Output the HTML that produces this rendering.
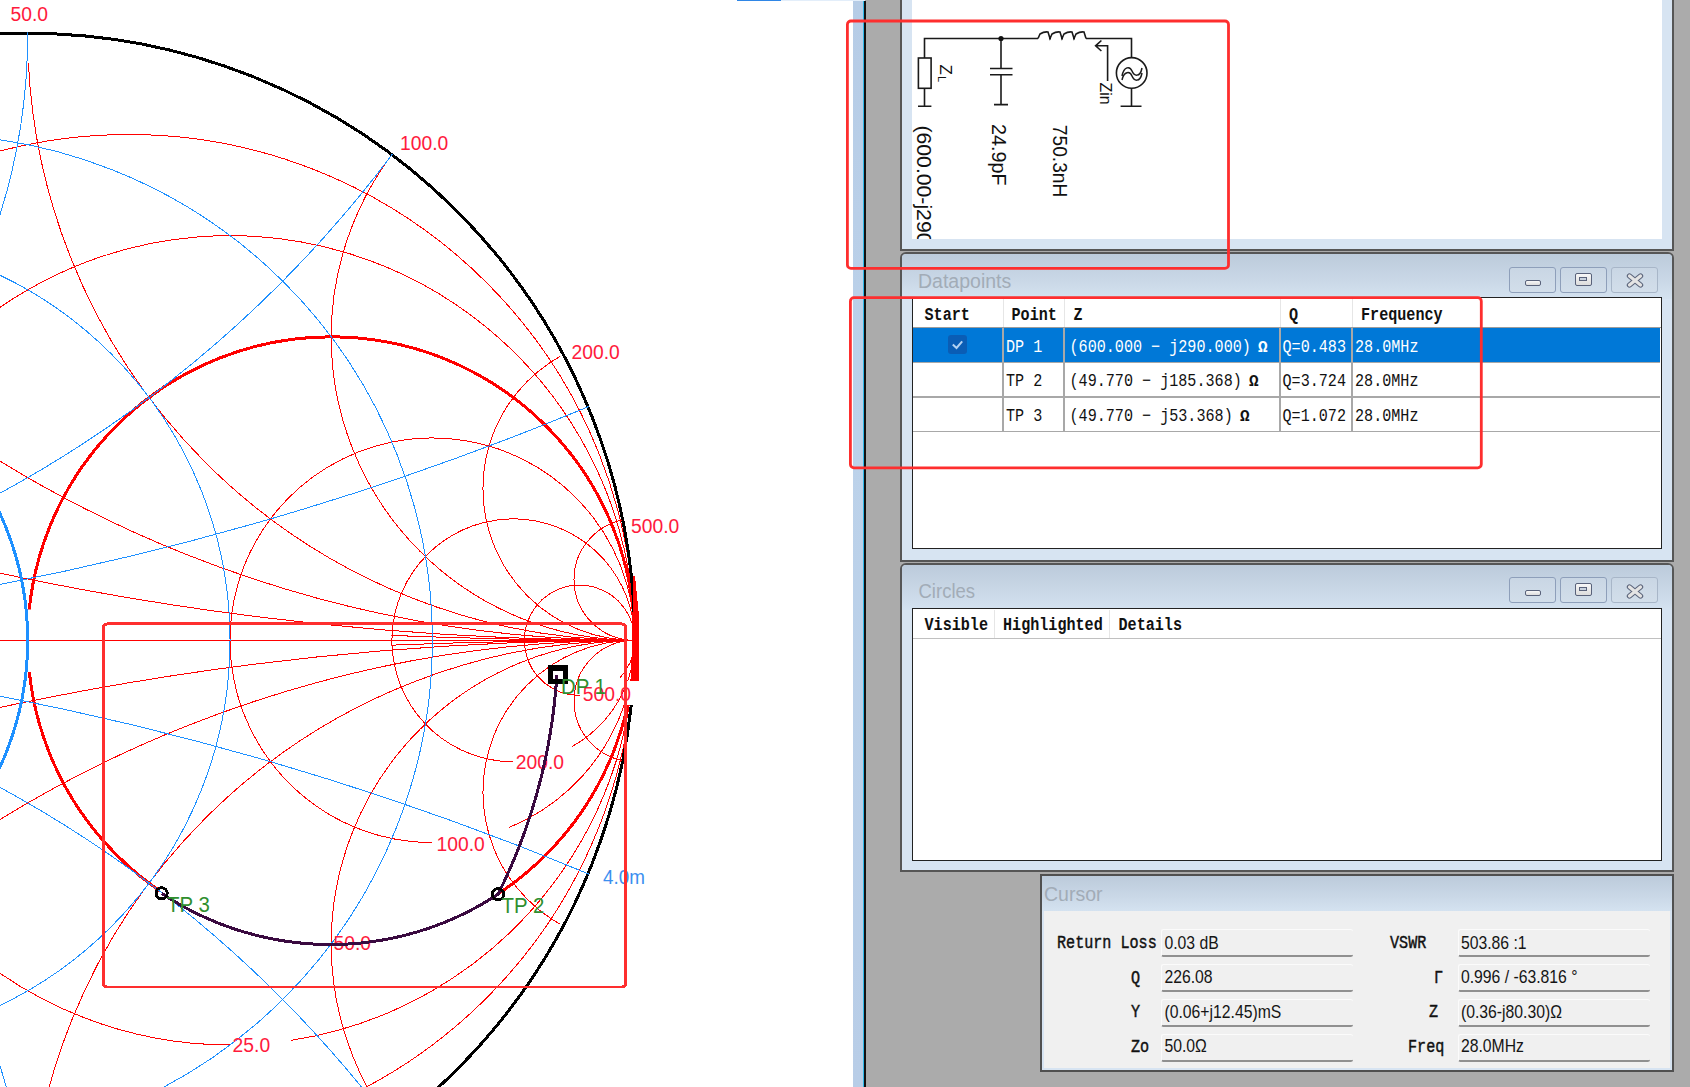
<!DOCTYPE html>
<html><head><meta charset="utf-8">
<style>
html,body{margin:0;padding:0;width:1690px;height:1087px;overflow:hidden;background:#fff;font-family:"Liberation Sans",sans-serif;}
.a{position:absolute;}
#chart{position:absolute;left:0;top:0;width:853px;height:1087px;}
#bg{left:865px;top:0;width:825px;height:1087px;background:#ababab;}
#strip{left:853px;top:1px;width:10px;height:1086px;background:linear-gradient(#b6cce6,#bcd2ea 40%,#b8cde7);}
#stripc{left:863px;top:1px;width:1px;height:1086px;background:#2fb8e8;}
#stripk{left:864px;top:1px;width:1.5px;height:1086px;background:#111;}
.panel{position:absolute;background:#d7e4f2;border:2px solid #565656;box-sizing:border-box;}
.title{position:absolute;left:0;right:0;top:0;height:45px;background:linear-gradient(#bccbdb,#cad8e7 60%,#d4e2f0);}
.ttext{position:absolute;left:16px;font-size:19px;color:#a3adb8;}
.tbl{position:absolute;background:#fff;border:1.5px solid #222;box-sizing:border-box;overflow:hidden;}
.mono{font-family:"Liberation Mono",monospace;}
.btn{position:absolute;top:0;width:46px;height:26px;box-sizing:border-box;border:1px solid #8e9fba;border-radius:3px;background:linear-gradient(#c9d6e4,#d2deea);}
.fld{position:absolute;width:192px;height:28px;box-sizing:border-box;background:#f0f0f0;border-top:1px solid #fbfbfb;border-left:1px solid #fbfbfb;border-bottom:2px solid #909090;border-radius:2.5px;font-size:17px;color:#111;padding-left:3px;line-height:26px;white-space:nowrap;}
.lbl{position:absolute;font-family:"Liberation Mono",monospace;font-size:15px;font-weight:bold;color:#111;white-space:nowrap;letter-spacing:-0.2px;}
.cell{position:absolute;font-family:"Liberation Mono",monospace;font-size:15px;white-space:nowrap;}
</style></head><body>
<svg id="chart" width="853" height="1087" viewBox="0 0 853 1087" shape-rendering="crispEdges">
<defs><clipPath id="uc"><circle cx="27.70" cy="640.30" r="608.00"/></clipPath>
<clipPath id="r4"><circle cx="513.30" cy="640.30" r="122.40"/></clipPath>
<clipPath id="gap"><path d="M-10 -10H900V609.5H-10Z M-10 672H900V1100H-10Z"/></clipPath>
<clipPath id="nb"><path d="M-10 -10H900V880H-10Z M-10 880H160V1100H-10Z M500 880H900V1100H500Z"/></clipPath>
<clipPath id="r005"><circle cx="56.60" cy="640.30" r="578.10"/></clipPath>
</defs>
<g clip-path="url(#uc)"><circle cx="128.87" cy="640.30" r="505.83" stroke="#ff0000" stroke-width="1" fill="none"/><path d="M230.03 1044.97 A404.67 404.67 0 0 1 199.34 236.80 A404.67 404.67 0 0 1 291.24 1040.31" stroke="#ff0000" stroke-width="1" fill="none"/><path d="M432.37 842.63 A202.33 202.33 0 0 1 393.41 441.75 A202.33 202.33 0 0 1 508.82 827.63" stroke="#ff0000" stroke-width="1" fill="none"/><path d="M513.30 761.70 A121.40 121.40 0 0 1 483.01 522.74 A121.40 121.40 0 0 1 571.97 746.58" stroke="#ff0000" stroke-width="1" fill="none"/><path d="M579.52 695.48 A55.18 55.18 0 0 1 557.43 589.73 A55.18 55.18 0 0 1 620.01 677.79" stroke="#ff0000" stroke-width="1" fill="none"/><line x1="-579.3" y1="640.3" x2="634.7" y2="640.3" stroke="#ff0000" stroke-width="1.2"/><g clip-path="url(#gap)"><g clip-path="url(#nb)"><circle cx="331.20" cy="640.30" r="303.50" stroke="#ff0000" stroke-width="3" fill="none"/></g></g></g>
<circle cx="27.70" cy="640.30" r="607.00" stroke="#000" stroke-width="3" fill="none"/>
<path d="M632.5 576 L635 576 L638.6 612 L638.6 681 L631 681 L632.5 612Z" fill="#ff0000"/>
<rect x="626.5" y="681" width="18" height="24" fill="#fff"/>
<g clip-path="url(#uc)"><g clip-path="url(#r005)"><circle cx="634.70" cy="-2394.70" r="3035.00" stroke="#ff0000" stroke-width="1" fill="none"/><circle cx="634.70" cy="3675.30" r="3035.00" stroke="#ff0000" stroke-width="1" fill="none"/><circle cx="634.70" cy="-573.70" r="1214.00" stroke="#ff0000" stroke-width="1" fill="none"/><circle cx="634.70" cy="1854.30" r="1214.00" stroke="#ff0000" stroke-width="1" fill="none"/><circle cx="634.70" cy="33.30" r="607.00" stroke="#ff0000" stroke-width="1" fill="none"/><circle cx="634.70" cy="1247.30" r="607.00" stroke="#ff0000" stroke-width="1" fill="none"/><circle cx="634.70" cy="336.80" r="303.50" stroke="#ff0000" stroke-width="1" fill="none"/><circle cx="634.70" cy="943.80" r="303.50" stroke="#ff0000" stroke-width="1" fill="none"/><circle cx="634.70" cy="488.55" r="151.75" stroke="#ff0000" stroke-width="1" fill="none"/><circle cx="634.70" cy="792.05" r="151.75" stroke="#ff0000" stroke-width="1" fill="none"/><circle cx="634.70" cy="579.60" r="60.70" stroke="#ff0000" stroke-width="1" fill="none"/><circle cx="634.70" cy="701.00" r="60.70" stroke="#ff0000" stroke-width="1" fill="none"/></g><g clip-path="url(#r4)"><circle cx="634.70" cy="-5429.70" r="6070.00" stroke="#ff0000" stroke-width="1" fill="none"/></g><g clip-path="url(#r4)"><circle cx="634.70" cy="6710.30" r="6070.00" stroke="#ff0000" stroke-width="1" fill="none"/></g><circle cx="-73.47" cy="640.30" r="505.83" stroke="#1e90ff" stroke-width="1" fill="none"/><circle cx="-174.63" cy="640.30" r="404.67" stroke="#1e90ff" stroke-width="1" fill="none"/><circle cx="-579.30" cy="-2394.70" r="3035.00" stroke="#1e90ff" stroke-width="1" fill="none"/><circle cx="-579.30" cy="3675.30" r="3035.00" stroke="#1e90ff" stroke-width="1" fill="none"/><circle cx="-579.30" cy="-573.70" r="1214.00" stroke="#1e90ff" stroke-width="1" fill="none"/><circle cx="-579.30" cy="1854.30" r="1214.00" stroke="#1e90ff" stroke-width="1" fill="none"/><circle cx="-579.30" cy="33.30" r="607.00" stroke="#1e90ff" stroke-width="1" fill="none"/><circle cx="-579.30" cy="1247.30" r="607.00" stroke="#1e90ff" stroke-width="1" fill="none"/><circle cx="-275.80" cy="640.30" r="303.50" stroke="#1e90ff" stroke-width="3" fill="none"/></g>
<text transform="translate(10.50,21.44) scale(0.92,1)" font-size="21" fill="#ff1a3c">50.0</text><text transform="translate(400.00,149.54) scale(0.92,1)" font-size="21" fill="#ff1a3c">100.0</text><text transform="translate(571.50,359.04) scale(0.92,1)" font-size="21" fill="#ff1a3c">200.0</text><text transform="translate(631.00,533.04) scale(0.92,1)" font-size="21" fill="#ff1a3c">500.0</text><text transform="translate(582.70,700.84) scale(0.92,1)" font-size="21" fill="#ff1a3c">500.0</text><text transform="translate(515.80,768.54) scale(0.92,1)" font-size="21" fill="#ff1a3c">200.0</text><text transform="translate(436.50,850.54) scale(0.92,1)" font-size="21" fill="#ff1a3c">100.0</text><text transform="translate(232.60,1052.34) scale(0.92,1)" font-size="21" fill="#ff1a3c">25.0</text><text transform="translate(603.00,884.18) scale(0.92,1)" font-size="20.5" fill="#3b8ff0">4.0m</text>
<text transform="translate(333.50,950.34) scale(0.92,1)" font-size="21" fill="#ff1a3c">50.0</text>
<path d="M556.82 675.05 L556.64 677.90 L556.44 680.75 L556.23 683.59 L556.01 686.44 L555.77 689.29 L555.51 692.13 L555.25 694.97 L554.96 697.81 L554.67 700.65 L554.36 703.49 L554.03 706.33 L553.70 709.16 L553.34 712.00 L552.97 714.83 L552.59 717.66 L552.20 720.49 L551.79 723.31 L551.36 726.14 L550.93 728.96 L550.47 731.78 L550.01 734.60 L549.53 737.41 L549.03 740.22 L548.52 743.03 L548.00 745.84 L547.46 748.64 L546.91 751.45 L546.35 754.24 L545.77 757.04 L545.17 759.83 L544.57 762.62 L543.95 765.41 L543.31 768.19 L542.66 770.98 L542.00 773.75 L541.32 776.53 L540.63 779.30 L539.92 782.06 L539.21 784.83 L538.47 787.59 L537.73 790.34 L536.97 793.10 L536.19 795.84 L535.40 798.59 L534.60 801.33 L533.79 804.07 L532.96 806.80 L532.11 809.53 L531.26 812.25 L530.39 814.97 L529.50 817.68 L528.61 820.40 L527.69 823.10 L526.77 825.80 L525.83 828.50 L524.88 831.19 L523.91 833.88 L522.93 836.56 L521.94 839.24 L520.94 841.91 L519.92 844.58 L518.88 847.24 L517.84 849.90 L516.78 852.55 L515.71 855.20 L514.62 857.84 L513.52 860.47 L512.41 863.10 L511.28 865.73 L510.15 868.35 L508.99 870.96 L507.83 873.56 L506.65 876.17 L505.46 878.76 L504.26 881.35 L503.04 883.93 L501.81 886.51 L500.57 889.08 L499.31 891.65 L498.04 894.20 L498.04 894.20 L494.31 896.63 L490.53 899.00 L486.73 901.32 L482.89 903.58 L479.02 905.78 L475.11 907.93 L471.18 910.02 L467.21 912.05 L463.22 914.02 L459.19 915.94 L455.14 917.79 L451.07 919.59 L446.96 921.32 L442.83 923.00 L438.68 924.61 L434.51 926.17 L430.31 927.66 L426.09 929.09 L421.85 930.46 L417.59 931.77 L413.31 933.01 L409.02 934.19 L404.70 935.31 L400.37 936.37 L396.03 937.36 L391.67 938.29 L387.30 939.15 L382.92 939.95 L378.52 940.68 L374.12 941.36 L369.71 941.96 L365.28 942.50 L360.85 942.98 L356.42 943.39 L351.98 943.74 L347.53 944.02 L343.08 944.24 L338.63 944.39 L334.17 944.48 L329.72 944.50 L325.26 944.45 L320.81 944.35 L316.36 944.17 L311.91 943.93 L307.46 943.63 L303.02 943.26 L298.59 942.82 L294.16 942.32 L289.74 941.76 L285.33 941.13 L280.93 940.43 L276.54 939.68 L272.16 938.85 L267.79 937.97 L263.44 937.02 L259.10 936.00 L254.78 934.92 L250.47 933.78 L246.18 932.58 L241.91 931.31 L237.66 929.99 L233.43 928.60 L229.21 927.14 L225.02 925.63 L220.86 924.05 L216.71 922.42 L212.59 920.72 L208.50 918.96 L204.43 917.15 L200.39 915.27 L196.38 913.33 L192.39 911.34 L188.44 909.29 L184.51 907.18 L180.62 905.01 L176.76 902.79 L172.93 900.51 L169.14 898.17 L165.38 895.78 L161.65 893.34" stroke="#3a0a40" stroke-width="3" fill="none"/>
<rect x="550.42" y="667.80" width="15" height="13.5" stroke="#000" stroke-width="5.5" fill="none"/>
<circle cx="498.04" cy="894.20" r="5.6" stroke="#000" stroke-width="3" fill="none"/>
<circle cx="161.65" cy="893.34" r="5.6" stroke="#000" stroke-width="3" fill="none"/>
<text transform="translate(560.90,694.09) scale(0.95,1)" font-size="21.5" fill="#2f8f2f">DP 1</text>
<text transform="translate(501.50,912.89) scale(0.95,1)" font-size="21.5" fill="#2f8f2f">TP 2</text>
<text transform="translate(167.00,911.89) scale(0.95,1)" font-size="21.5" fill="#2f8f2f">TP 3</text>
<rect x="103.5" y="623.9" width="522" height="363.1" rx="3.5" stroke="#fe2e2e" stroke-width="2.9" fill="none"/>
</svg>
<div class="a" style="left:737px;top:0;width:44px;height:1px;background:#2f86e6"></div>
<div class="a" style="left:781px;top:0;width:137px;height:1px;background:#e3eefa"></div><div class="a" style="left:917px;top:0;width:3px;height:1px;background:#2f86e6"></div>
<div id="bg" class="a"></div>
<div id="strip" class="a"></div>
<div id="stripc" class="a"></div>
<div id="stripk" class="a"></div>
<!-- Panel 1: schematic -->
<div class="panel" style="left:900px;top:-2px;width:774px;height:253px;"></div>
<div class="a" style="left:912px;top:0;width:749.5px;height:238.6px;background:#fff;overflow:hidden;">
<svg width="750" height="239" viewBox="912 0 750 239" style="position:absolute;left:0;top:0">
<g stroke="#1a1a1a" stroke-width="1.6" fill="none">
<path d="M924.5 88.3V106.2M918 106.2H931.4M924.5 58V38.5H1038M1086 38.5H1131.5V57.5M1131.5 88.4V106.2M1120.6 106.2H1141.5"/>
<rect x="918.4" y="58" width="12.7" height="30.3"/>
<path d="M1001 38.5V68.5M990 68.5H1012.5M990 74.7H1012.5M1001 74.7V104.6M994 104.6H1008"/>
<path d="M1038 38.5 L1040 34 Q1044 31.5,1048 32 L1050 38.5 L1052 34 Q1056 31.5,1060 32 L1062 38.5 L1064 34 Q1068 31.5,1072 32 L1074 38.5 L1076 34 Q1080 31.5,1084 32 L1086 38.5"/>
<circle cx="1131.7" cy="72.9" r="15.3"/>
<path d="M1122 76 C1124 66,1130 66,1132 71 S1140 78,1142 68" stroke-width="1.5"/>
<path d="M1122 80 C1124 71,1130 71,1132 76 S1140 83,1142 73" stroke-width="1.5"/>
<path d="M1107.6 81V45.8H1095.6M1101.4 40.5L1095.6 45.8L1101.4 51"/>
</g>
<g fill="#111"><circle cx="1001" cy="38.5" r="2.6"/><circle cx="1050" cy="38.5" r="1"/><circle cx="1062" cy="38.5" r="1"/><circle cx="1074" cy="38.5" r="1"/></g>
<g font-family="Liberation Sans" fill="#111">
<text transform="translate(940,64.5) rotate(90)" font-size="17">Z</text>
<text transform="translate(937.5,76) rotate(90)" font-size="11">L</text>
<text transform="translate(1099.5,82.5) rotate(90)" font-size="16">Zin</text>
<text transform="translate(917,125.5) rotate(90) scale(1.06,1)" font-size="20">(600.00-j290.00)</text>
<text transform="translate(992,124) rotate(90) scale(0.99,1)" font-size="20">24.9pF</text>
<text transform="translate(1052.5,124.8) rotate(90) scale(0.96,1)" font-size="20">750.3nH</text>
</g>
</svg>
</div>

<!-- Panel 2: Datapoints -->
<div class="panel" style="left:900px;top:252px;width:774px;height:310px;border-radius:6px 6px 0 0;overflow:hidden;">
  <div class="title">
    <div class="btn" style="width:47px;left:607px;top:12.5px;"><div class="a" style="left:14.5px;top:12px;width:16.5px;height:6px;border:1.2px solid #59627a;border-radius:2px;background:linear-gradient(#f8f8f8,#dcdcdc);box-sizing:border-box"></div></div>
    <div class="btn" style="width:47px;left:658px;top:12.5px;"><div class="a" style="left:14px;top:5px;width:16.5px;height:13px;border:1.3px solid #59627a;border-radius:2px;background:linear-gradient(#f8f8f8,#dcdcdc);box-sizing:border-box"><div class="a" style="left:3.2px;top:3.2px;width:7.5px;height:4px;border:1.2px solid #59627a;box-sizing:border-box;background:#c8d2de"></div></div></div>
    <div class="btn" style="width:47px;left:709px;top:12.5px;border-color:#a8b6c8;"><svg class="a" style="left:14px;top:5.5px" width="18" height="15"><path d="M3.5 3L14.5 12M14.5 3L3.5 12" stroke="#5d667c" stroke-width="5.4" stroke-linecap="round"/><path d="M3.5 3L14.5 12M14.5 3L3.5 12" stroke="#e4e4e4" stroke-width="3.2" stroke-linecap="round"/></svg></div>
  </div>
  <div class="tbl" style="left:10px;top:43px;width:750px;height:252px;">
    <div class="a" style="left:0;top:28.5px;width:750px;height:1.7px;background:#9c9c9c"></div>
    <div class="a" style="left:89.5px;top:0;width:1px;height:29px;background:#e6e6e6"></div>
    <div class="a" style="left:150.5px;top:0;width:1px;height:29px;background:#e6e6e6"></div>
    <div class="a" style="left:366.5px;top:0;width:1px;height:29px;background:#e6e6e6"></div>
    <div class="a" style="left:438.5px;top:0;width:1px;height:29px;background:#e6e6e6"></div>
    <div class="a" style="left:0;top:30px;width:747px;height:33.5px;background:#0078d7"></div>
    <div class="a" style="left:0;top:63.5px;width:747px;height:1.5px;background:#a8a8a8"></div>
    <div class="a" style="left:0;top:98px;width:747px;height:1.5px;background:#a8a8a8"></div>
    <div class="a" style="left:0;top:132.5px;width:747px;height:1.5px;background:#a8a8a8"></div>
    <div class="a" style="left:89px;top:30px;width:1.5px;height:103px;background:#a8a8a8"></div>
    <div class="a" style="left:150px;top:30px;width:1.5px;height:103px;background:#a8a8a8"></div>
    <div class="a" style="left:366px;top:30px;width:1.5px;height:103px;background:#a8a8a8"></div>
    <div class="a" style="left:438px;top:30px;width:1.5px;height:103px;background:#a8a8a8"></div>
    <div class="a" style="left:35px;top:37px;width:19px;height:19px;border-radius:3px;background:#0a5db5;"><svg class="a" style="left:0;top:0" width="19" height="19"><path d="M4.8 9.5L8.5 13L14.2 6.3" stroke="#b4d2f2" stroke-width="2" fill="none"/></svg></div>
  </div>
</div>

<!-- Panel 3: Circles -->
<div class="panel" style="left:900px;top:562.5px;width:774px;height:309.5px;border-radius:6px 6px 0 0;overflow:hidden;">
  <div class="title">
    <div class="btn" style="width:47px;left:607px;top:12.5px;"><div class="a" style="left:14.5px;top:12px;width:16.5px;height:6px;border:1.2px solid #59627a;border-radius:2px;background:linear-gradient(#f8f8f8,#dcdcdc);box-sizing:border-box"></div></div>
    <div class="btn" style="width:47px;left:658px;top:12.5px;"><div class="a" style="left:14px;top:5px;width:16.5px;height:13px;border:1.3px solid #59627a;border-radius:2px;background:linear-gradient(#f8f8f8,#dcdcdc);box-sizing:border-box"><div class="a" style="left:3.2px;top:3.2px;width:7.5px;height:4px;border:1.2px solid #59627a;box-sizing:border-box;background:#c8d2de"></div></div></div>
    <div class="btn" style="width:47px;left:709px;top:12.5px;border-color:#a8b6c8;"><svg class="a" style="left:14px;top:5.5px" width="18" height="15"><path d="M3.5 3L14.5 12M14.5 3L3.5 12" stroke="#5d667c" stroke-width="5.4" stroke-linecap="round"/><path d="M3.5 3L14.5 12M14.5 3L3.5 12" stroke="#e4e4e4" stroke-width="3.2" stroke-linecap="round"/></svg></div>
  </div>
  <div class="tbl" style="left:10px;top:43.5px;width:750px;height:253px;">
    <div class="a" style="left:0;top:28.5px;width:750px;height:1.5px;background:#c0c0c0"></div>
    <div class="a" style="left:80.5px;top:1px;width:1px;height:28px;background:#e6e6e6"></div>
    <div class="a" style="left:195.5px;top:1px;width:1px;height:28px;background:#e6e6e6"></div>
  </div>
</div>

<!-- Panel 4: Cursor -->
<div class="panel" style="left:1040px;top:873.5px;width:634px;height:198px;background:#f0f0f0;border-color:#505050;">
  <div class="title" style="height:35.5px;"></div>
  <div class="a" style="left:0;top:35.5px;width:2px;height:158.5px;background:#d7e4f2"></div>
  <div class="a" style="right:0;top:35.5px;width:2.5px;height:158.5px;background:#d7e4f2"></div>
  <div class="a" style="left:0;top:192px;width:630px;height:2px;background:#d7e4f2"></div>
</div>
<div class="fld" style="left:1161px;top:929px;"></div>
<div class="fld" style="left:1161px;top:964px;"></div>
<div class="fld" style="left:1161px;top:998.5px;"></div>
<div class="fld" style="left:1161px;top:1034px;"></div>
<div class="fld" style="left:1458px;top:929px;"></div>
<div class="fld" style="left:1458px;top:964px;"></div>
<div class="fld" style="left:1458px;top:998.5px;"></div>
<div class="fld" style="left:1458px;top:1034px;"></div>

<!-- text overlay + red highlight rects -->
<svg class="a" style="left:0;top:0" width="1690" height="1087">
<g font-family="Liberation Sans" fill="#a2acb7" font-size="19.5">
<text x="918" y="287.6">Datapoints</text>
<text transform="translate(918.5,598.4) scale(0.95,1)">Circles</text>
<text x="1044" y="901">Cursor</text>
</g>
<g font-family="Liberation Mono" font-size="18" font-weight="bold" fill="#111">
<text transform="translate(924.5,320.3) scale(0.84,1)">Start</text>
<text transform="translate(1011.5,320.3) scale(0.84,1)">Point</text>
<text transform="translate(1073.5,320.3) scale(0.84,1)">Z</text>
<text transform="translate(1289,320.3) scale(0.84,1)">Q</text>
<text transform="translate(1361,320.3) scale(0.84,1)">Frequency</text>
<text transform="translate(924.5,630.3) scale(0.84,1)">Visible</text>
<text transform="translate(1003,630.3) scale(0.84,1)">Highlighted</text>
<text transform="translate(1118.5,630.3) scale(0.84,1)">Details</text>

</g>
<g font-family="Liberation Mono" font-size="18" fill="#111" stroke="#111" stroke-width="0.45"><text transform="translate(1057,948) scale(0.84,1)">Return Loss</text>
<text transform="translate(1131,982.5) scale(0.84,1)">Q</text>
<text transform="translate(1131,1017) scale(0.84,1)">Y</text>
<text transform="translate(1131,1052) scale(0.84,1)">Zo</text>
<text transform="translate(1390,948) scale(0.84,1)">VSWR</text>
<text transform="translate(1434,982.5) scale(0.84,1)">Γ</text>
<text transform="translate(1429,1017) scale(0.84,1)">Z</text>
<text transform="translate(1408,1052) scale(0.84,1)">Freq</text></g><g font-family="Liberation Mono" font-size="18" fill="#fff">
<text transform="translate(1006,351.7) scale(0.84,1)">DP 1</text>
<text transform="translate(1069.5,351.7) scale(0.84,1)">(600.000 − j290.000)</text>
<text transform="translate(1258,351.7)" font-weight="bold" font-size="16">Ω</text>
<text transform="translate(1282.5,351.7) scale(0.84,1)">Q=0.483</text>
<text transform="translate(1355,351.7) scale(0.84,1)">28.0MHz</text>
</g>
<g font-family="Liberation Mono" font-size="18" fill="#111">
<text transform="translate(1006,386.4) scale(0.84,1)">TP 2</text>
<text transform="translate(1069.5,386.4) scale(0.84,1)">(49.770 − j185.368)</text>
<text transform="translate(1249,386.4)" font-weight="bold" font-size="16">Ω</text>
<text transform="translate(1282.5,386.4) scale(0.84,1)">Q=3.724</text>
<text transform="translate(1355,386.4) scale(0.84,1)">28.0MHz</text>
<text transform="translate(1006,421) scale(0.84,1)">TP 3</text>
<text transform="translate(1069.5,421) scale(0.84,1)">(49.770 − j53.368)</text>
<text transform="translate(1240,421)" font-weight="bold" font-size="16">Ω</text>
<text transform="translate(1282.5,421) scale(0.84,1)">Q=1.072</text>
<text transform="translate(1355,421) scale(0.84,1)">28.0MHz</text>
</g>
<g font-family="Liberation Sans" font-size="17.5" fill="#151515">
<text transform="translate(1164.5,948.6) scale(0.9,1)">0.03 dB</text>
<text transform="translate(1164.5,983) scale(0.9,1)">226.08</text>
<text transform="translate(1164.5,1017.5) scale(0.9,1)">(0.06+j12.45)mS</text>
<text transform="translate(1164.5,1052) scale(0.9,1)">50.0Ω</text>
<text transform="translate(1461,948.6) scale(0.9,1)">503.86 :1</text>
<text transform="translate(1461,983) scale(0.9,1)">0.996 / -63.816 °</text>
<text transform="translate(1461,1017.5) scale(0.9,1)">(0.36-j80.30)Ω</text>
<text transform="translate(1461,1052) scale(0.9,1)">28.0MHz</text>
</g>
<g fill="none" stroke="#fe2e2e" stroke-width="2.8">
<rect x="847.4" y="21" width="381.1" height="247.4" rx="3.5"/>
<rect x="850.4" y="297.7" width="630.9" height="170.1" rx="3.5"/>
</g></svg>

</body></html>
